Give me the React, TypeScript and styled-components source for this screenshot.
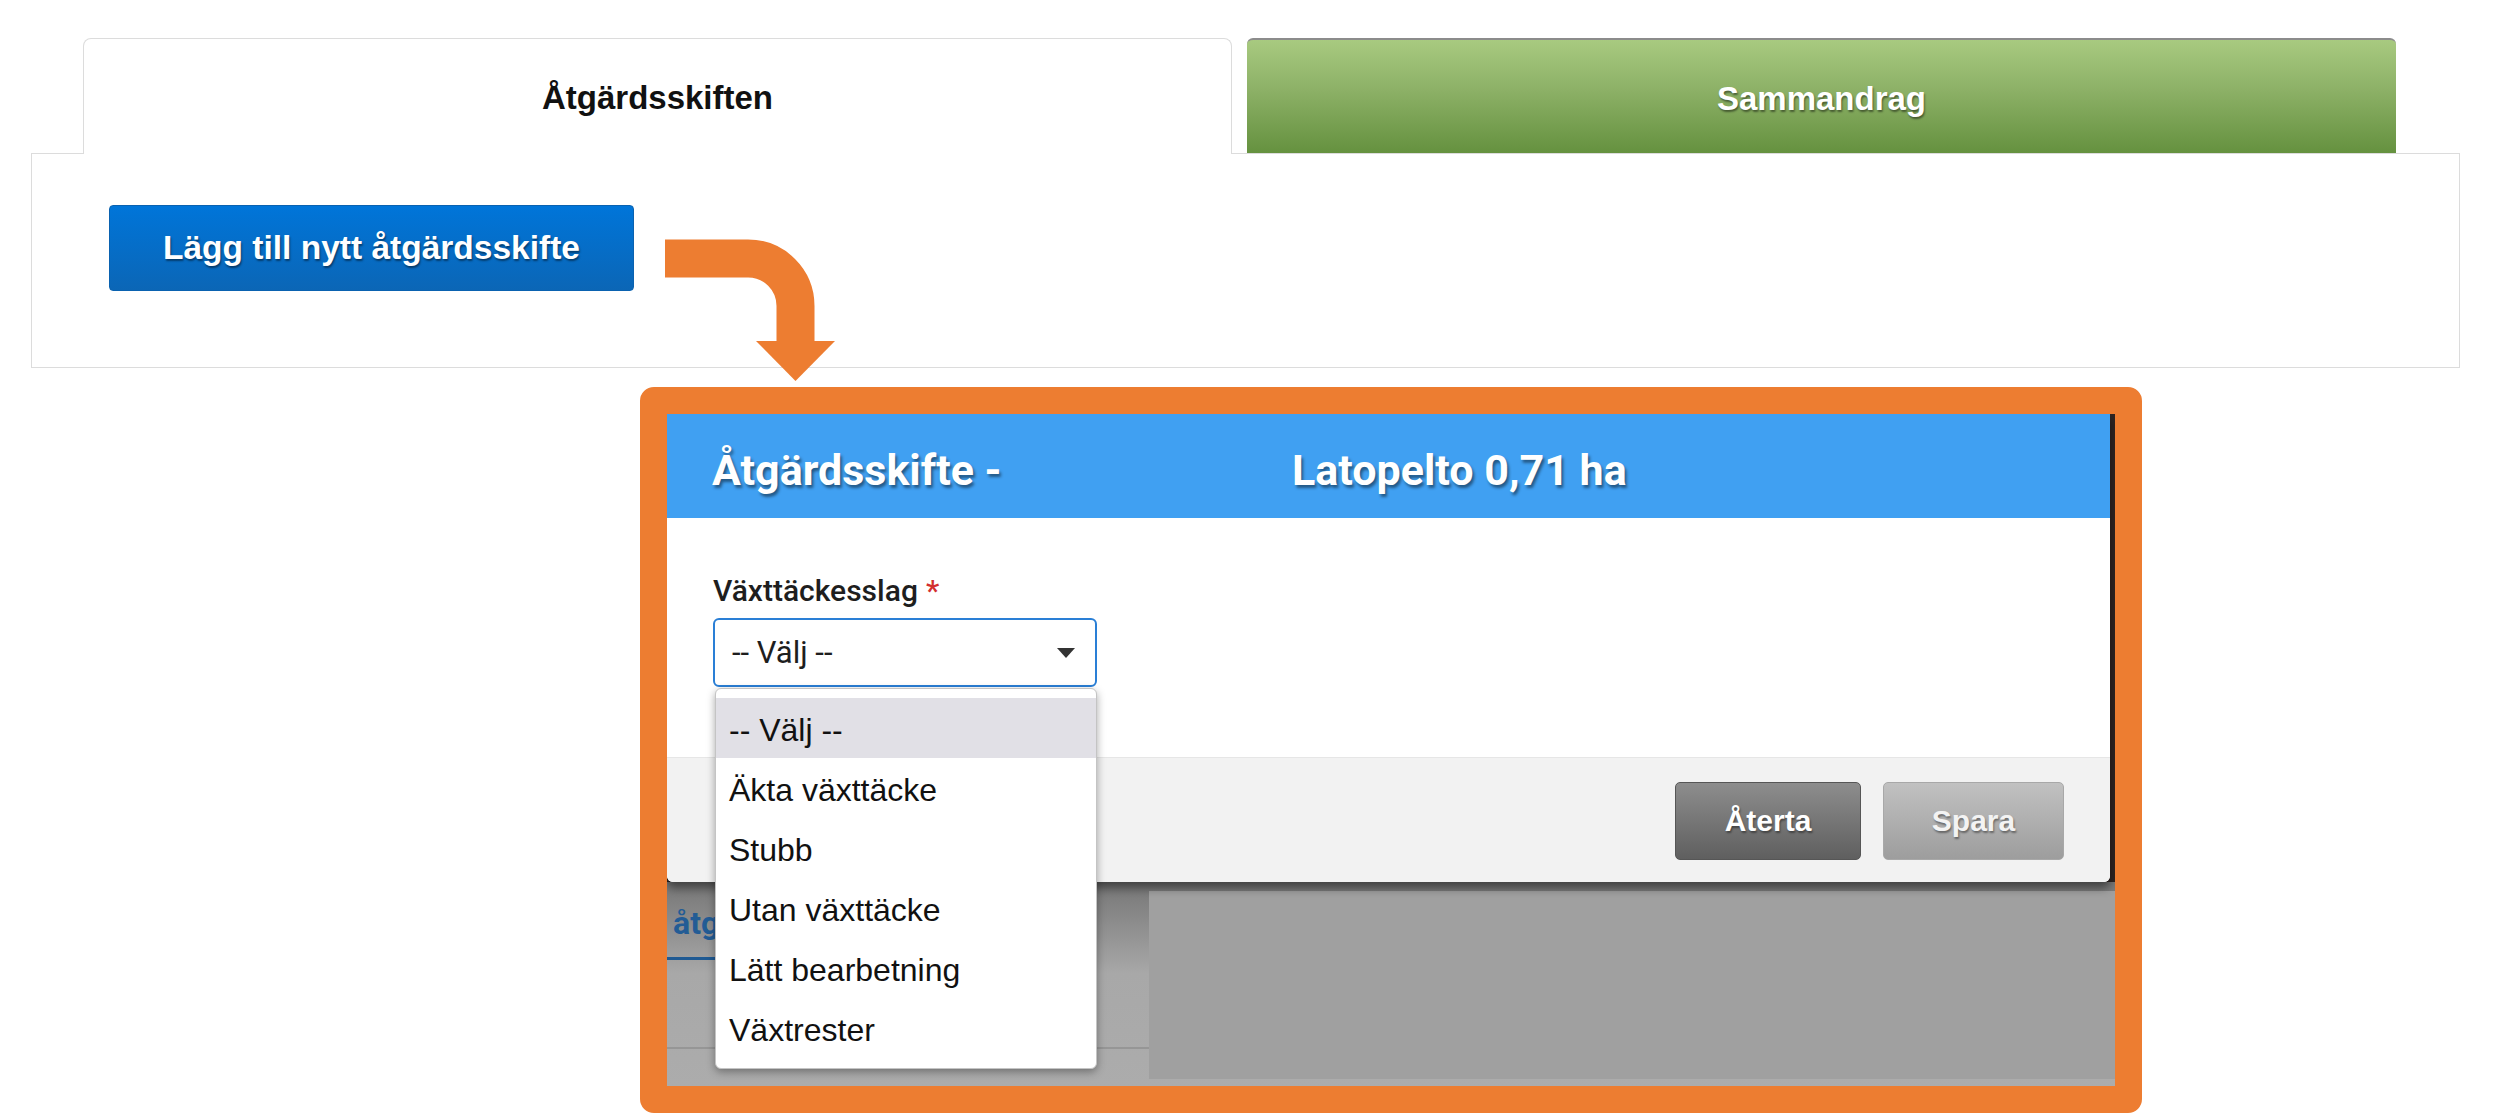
import React from 'react'
import styled, { createGlobalStyle, css } from 'styled-components'

const GlobalStyle = createGlobalStyle`
  html, body {
    margin: 0;
    padding: 0;
    background: #fff;
  }

  body {
    font-family: 'Liberation Sans', Arial, sans-serif;
  }

  * {
    box-sizing: border-box;
  }
`

const Page = styled.div`
  position: relative;
  width: 2501px;
  height: 1114px;
  overflow: hidden;
  padding-top: 38px;
`

const TabArea = styled.section`
  margin-left: 31px;
  width: 2429px;
`

const TabRow = styled.div`
  display: flex;
  gap: 15px;
  padding-left: 52px;
`

const Tab = styled.div<{ $active?: boolean }>`
  position: relative;
  z-index: 1;
  width: 1149px;
  display: flex;
  align-items: center;
  justify-content: center;
  font: bold 33px 'Liberation Sans', Arial, sans-serif;
  border-radius: 8px 8px 0 0;

  ${props => props.$active ? css`
    height: 116px;
    margin-bottom: -1px;
    background: #fff;
    color: #111;
    border: 1px solid #dcdcdc;
    border-bottom: none;
    padding-top: 2px;
  ` : css`
    height: 115px;
    background: linear-gradient(#a8ca80, #8cb066 45%, #65913f);
    color: #fff;
    border-top: 2px solid #8c8c8c;
    border-radius: 6px 6px 0 0;
    text-shadow: 1px 2px 2px rgba(0, 0, 0, 0.45);
    padding-top: 4px;
  `}
`

const Panel = styled.div`
  height: 215px;
  border: 1px solid #dcdcdc;
  background: #fff;
  padding: 51px 0 0 77px;
`

const PrimaryButton = styled.button`
  width: 525px;
  height: 86px;
  border: 1px solid #0a62b0;
  border-radius: 4px;
  background: linear-gradient(#0075d9, #0b66b6);
  color: #fff;
  font: bold 33.5px 'Liberation Sans', Arial, sans-serif;
  text-shadow: 1px 2px 2px rgba(0, 0, 0, 0.45);
  padding: 0;
  cursor: pointer;
`

const ArrowOverlay = styled.svg`
  position: absolute;
  left: 0;
  top: 0;
  pointer-events: none;
`

const Callout = styled.div`
  margin: 19px 0 0 640px;
  width: 1502px;
  height: 726px;
  border: 27px solid #ed7d31;
  border-radius: 14px;
`

const Screen = styled.div`
  position: relative;
  width: 100%;
  height: 100%;
  display: flex;
  flex-direction: column;
  overflow: hidden;
  background: #2e2422;
`

const Modal = styled.div`
  position: relative;
  z-index: 1;
  width: 1443px;
  background: #fff;
  border-radius: 0 0 6px 6px;
  box-shadow: 0 6px 10px rgba(0, 0, 0, 0.45);
`

const ModalHeader = styled.header`
  height: 104px;
  background: #40a0f2;
  display: flex;
  align-items: center;
  padding: 8px 0 0 45px;
  color: #fff;
  font: bold 43px Roboto, 'Liberation Sans', sans-serif;
  text-shadow: 2px 3px 3px rgba(0, 0, 0, 0.45);
`

const HeaderCell = styled.span<{ $width?: number }>`
  flex: none;
  width: ${props => props.$width ? `${props.$width}px` : 'auto'};
`

const ModalBody = styled.div`
  height: 239px;
  padding: 55px 46px 0;
`

const FieldLabel = styled.label`
  display: block;
  font: 500 30px/36px Roboto, 'Liberation Sans', sans-serif;
  color: #1e1e1e;
  margin-bottom: 9px;

  & em {
    font-style: normal;
    color: #d32f2f;
    margin-left: 8px;
  }
`

const SelectBox = styled.div`
  width: 384px;
  height: 69px;
  border: 2px solid #2a7fd6;
  border-radius: 6px;
  padding: 0 20px 0 17px;
  display: flex;
  align-items: center;
  justify-content: space-between;
  font: 400 31px Roboto, 'Liberation Sans', sans-serif;
  color: #1e1e1e;
`

const ModalFooter = styled.footer`
  height: 125px;
  background: #f2f2f2;
  border-top: 1px solid #e6e6e6;
  border-radius: 0 0 6px 6px;
  display: flex;
  justify-content: flex-end;
  align-items: flex-start;
  gap: 22px;
  padding: 24px 46px 0 0;
`

const FooterButton = styled.button<{ $tone: 'dark' | 'light' }>`
  height: 78px;
  border-radius: 5px;
  font: bold 30px 'Liberation Sans', Arial, sans-serif;
  text-shadow: 1px 2px 2px rgba(0, 0, 0, 0.4);
  padding: 0;
  cursor: pointer;

  ${props => props.$tone === 'dark' ? css`
    width: 186px;
    background: linear-gradient(#8d8d8d, #5f5f5f);
    border: 1px solid #565656;
    color: #fff;
  ` : css`
    width: 181px;
    background: linear-gradient(#c1c1c1, #9d9d9d);
    border: 1px solid #a8a8a8;
    color: #f3f3f3;
  `}
`

const Backdrop = styled.div`
  flex: 1;
  display: flex;
  background: linear-gradient(#767676, #a8a8a8 45%, #acacac);
`

const BackdropSide = styled.div`
  width: 482px;
  display: flex;
  flex-direction: column;
`

const BackdropTab = styled.div`
  width: 80px;
  height: 78px;
  padding: 22px 0 0 6px;
  border-bottom: 3px solid #1f5a93;
  font: bold 32px Roboto, 'Liberation Sans', sans-serif;
  color: #235c95;
`

const BackdropRule = styled.div`
  margin-top: 87px;
  height: 2px;
  background: #969696;
`

const BackdropPane = styled.div`
  flex: 1;
  margin: 9px 0 7px;
  background: #a0a0a0;
`

const DropdownList = styled.ul`
  position: absolute;
  z-index: 2;
  left: 48px;
  top: 274px;
  width: 382px;
  height: 381px;
  margin: 0;
  padding: 9px 0 0;
  list-style: none;
  background: #fff;
  border: 1px solid #c4c4c4;
  border-radius: 6px;
  box-shadow: 0 3px 8px rgba(0, 0, 0, 0.35);
`

const DropdownItem = styled.li<{ $selected?: boolean }>`
  height: 60px;
  display: flex;
  align-items: center;
  padding: 4px 0 0 13px;
  font: 32px 'Liberation Sans', Arial, sans-serif;
  color: #111;
  background: ${props => props.$selected ? '#e1e0e6' : 'transparent'};
`

const options = [
  '-- Välj --',
  'Äkta växttäcke',
  'Stubb',
  'Utan växttäcke',
  'Lätt bearbetning',
  'Växtrester',
]

const Caret = () => (
  <svg width="18" height="10" viewBox="0 0 18 10">
    <path d="M0 0 H18 L9 10 Z" fill="#333" />
  </svg>
)

const App = () => {
  return (
    <Page>
      <GlobalStyle />
      <TabArea>
        <TabRow>
          <Tab $active>Åtgärdsskiften</Tab>
          <Tab>Sammandrag</Tab>
        </TabRow>
        <Panel>
          <PrimaryButton>Lägg till nytt åtgärdsskifte</PrimaryButton>
        </Panel>
      </TabArea>

      <ArrowOverlay width="900" height="400" viewBox="0 0 900 400">
        <path
          d="M665 258.5 H748 A47.5 47.5 0 0 1 795.5 306 V345"
          fill="none"
          stroke="#ed7d31"
          strokeWidth="38"
        />
        <polygon points="756,341 835,341 795.5,381" fill="#ed7d31" />
      </ArrowOverlay>

      <Callout>
        <Screen>
          <Modal>
            <ModalHeader>
              <HeaderCell $width={580}>Åtgärdsskifte -</HeaderCell>
              <HeaderCell>Latopelto 0,71 ha</HeaderCell>
            </ModalHeader>
            <ModalBody>
              <FieldLabel>
                Växttäckesslag<em>*</em>
              </FieldLabel>
              <SelectBox>
                <span>-- Välj --</span>
                <Caret />
              </SelectBox>
            </ModalBody>
            <ModalFooter>
              <FooterButton $tone="dark">Återta</FooterButton>
              <FooterButton $tone="light">Spara</FooterButton>
            </ModalFooter>
          </Modal>

          <Backdrop>
            <BackdropSide>
              <BackdropTab>åtg</BackdropTab>
              <BackdropRule />
            </BackdropSide>
            <BackdropPane />
          </Backdrop>

          <DropdownList>
            {options.map((option, i) => (
              <DropdownItem key={option} $selected={i === 0}>
                {option}
              </DropdownItem>
            ))}
          </DropdownList>
        </Screen>
      </Callout>
    </Page>
  )
}

export default App
